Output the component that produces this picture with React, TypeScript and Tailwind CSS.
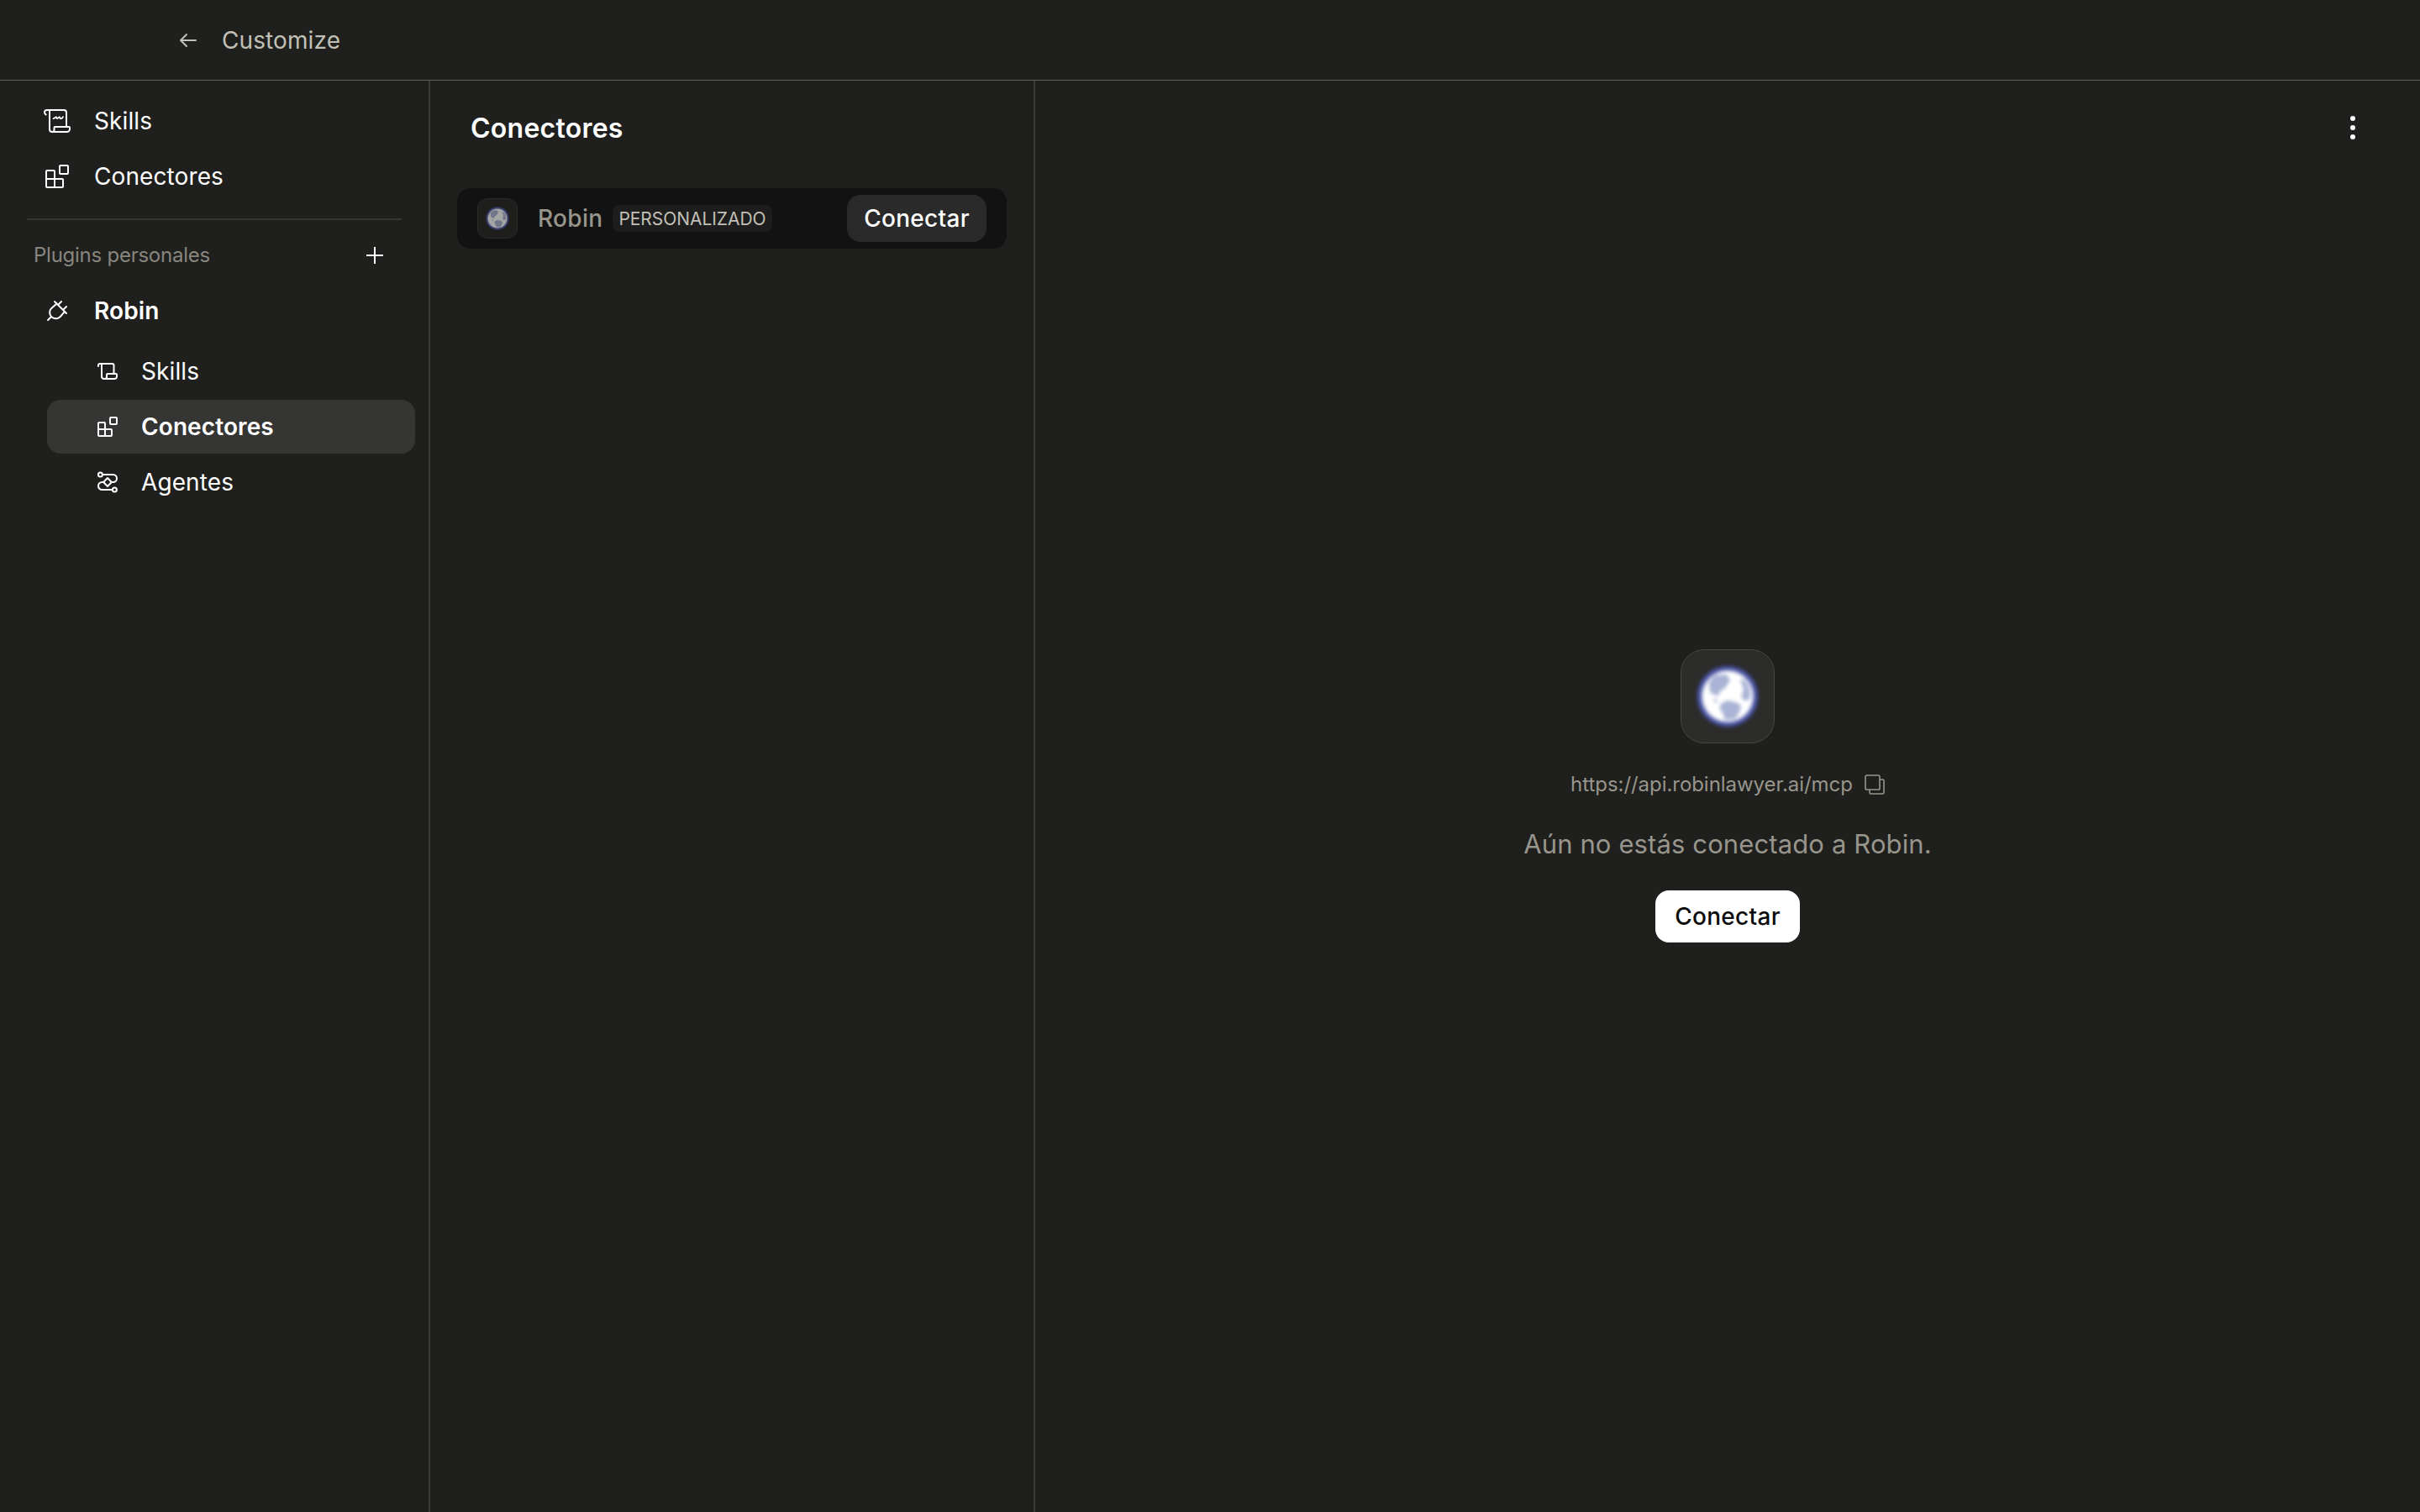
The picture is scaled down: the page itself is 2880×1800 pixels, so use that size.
import type { ReactNode } from "react";
import clsx from "clsx";

type IconProps = { className?: string };

function ScrollIcon({ className }: IconProps) {
    return (
        <svg viewBox="0 0 40 40" fill="none" stroke="currentColor" strokeWidth="2" strokeLinecap="round" strokeLinejoin="round" className={className}>
            <path d="M6.6 12.4C5.4 11.6 5 10.8 5 9.8A2.8 2.8 0 0 1 7.8 7H28a3 3 0 0 1 3 3v17" />
            <path d="M11 7v23a3 3 0 0 0 3 3h17.5a3.5 3.5 0 0 0 3.5-3.5V28a1 1 0 0 0-1-1H17.5a1 1 0 0 0-1 1v2.5A2.5 2.5 0 0 1 14 33" />
            <path d="m15.5 17.2 3.3-2 .9 2 3.1-2 .9 2c1.900 0 2.900-.8 3.300-2.200" strokeWidth="1.700" />
        </svg>
    );
}

function ScrollSmallIcon({ className }: IconProps) {
    return (
        <svg viewBox="0 0 32 32" fill="none" stroke="currentColor" strokeWidth="2" strokeLinecap="round" strokeLinejoin="round" className={className}>
            <path d="M5 10V9a2 2 0 0 1 2-2h14.5a2 2 0 0 1 2 2v10" />
            <path d="M9 7v15a3 3 0 0 0 3 3h12a3 3 0 0 0 3-3v-2a1 1 0 0 0-1-1H16a1 1 0 0 0-1 1v2.5a2.5 2.5 0 0 1-2.5 2.5" />
        </svg>
    );
}

function BlocksIcon({ className }: IconProps) {
    return (
        <svg viewBox="0 0 40 40" fill="none" stroke="currentColor" strokeWidth="2" strokeLinejoin="round" className={className}>
            <rect x="23" y="7" width="10" height="10" rx="1" />
            <path d="M8 13h8a1 1 0 0 1 1 1v9h9a1 1 0 0 1 1 1v8a1 1 0 0 1-1 1H8a1 1 0 0 1-1-1V14a1 1 0 0 1 1-1ZM7 23h10v10" />
        </svg>
    );
}

function BlocksSmallIcon({ className }: IconProps) {
    return (
        <svg viewBox="0 0 32 32" fill="none" stroke="currentColor" strokeWidth="2" strokeLinejoin="round" className={className}>
            <rect x="19" y="5" width="8" height="8" rx="1" />
            <path d="M6 11h6a1 1 0 0 1 1 1v7h7a1 1 0 0 1 1 1v6a1 1 0 0 1-1 1H6a1 1 0 0 1-1-1V12a1 1 0 0 1 1-1ZM5 19h8v8" />
        </svg>
    );
}

function AgentsIcon({ className }: IconProps) {
    return (
        <svg viewBox="0 0 32 32" fill="none" stroke="currentColor" strokeWidth="2" strokeLinecap="round" strokeLinejoin="round" className={className}>
            <circle cx="7.4" cy="7" r="2.5" />
            <circle cx="24.4" cy="25" r="2.5" />
            <path d="M10 7h12.5a4.5 4.5 0 0 1 0 9H21" />
            <path d="M11 16H9.5a4.5 4.5 0 0 0 0 9H22" />
            <path d="m16 11 4.8 5-4.8 5-4.8-5Z" />
        </svg>
    );
}

function PlugIcon({ className }: IconProps) {
    return (
        <svg viewBox="0 0 40 40" fill="none" stroke="currentColor" strokeWidth="2" strokeLinecap="round" strokeLinejoin="round" className={className}>
            <path d="m17 9 14 14" />
            <path d="M19.5 11.5 13 17.2a7.3 7.3 0 0 0 10.2 10.4L29 21" />
            <path d="M21.5 12.5 25 9M27.5 18.5 31 15M9 31l3.8-3.8" />
        </svg>
    );
}

function ArrowLeftIcon({ className }: IconProps) {
    return (
        <svg viewBox="0 0 32 32" fill="none" stroke="currentColor" strokeWidth="2" strokeLinecap="round" strokeLinejoin="round" className={className}>
            <path d="M25 16H7M14 9l-7 7 7 7" />
        </svg>
    );
}

function CopyIcon({ className }: IconProps) {
    return (
        <svg viewBox="0 0 24 24" fill="none" stroke="currentColor" strokeWidth="1.6" strokeLinejoin="round" className={className}>
            <rect x="1" y="1" width="17" height="17" rx="1.8" />
            <path d="M18 6h3.4A1.6 1.6 0 0 1 23 7.6v13.8a1.6 1.6 0 0 1-1.6 1.6H7.6A1.6 1.6 0 0 1 6 21.4V18" />
        </svg>
    );
}

function Globe({ className }: IconProps) {
    return (
        <svg viewBox="0 0 80 80" className={className}>
            <g className="blur-[2px]">
                <circle cx="40" cy="40" r="36.5" fill="#434e9c" />
                <circle cx="40" cy="40" r="32.5" fill="#7f88c2" />
                <circle cx="40" cy="40" r="30" fill="#ffffff" />
                <g fill="#a9b3d4">
                    <path d="m18 23 7-8 14-1 4 7-6 9-5 3-4 7-9-5Z" />
                    <path d="m55 19 6 2 5 9 1 11-5 5-6-5 3-9Z" />
                    <path d="m33 48 7-3 10 2 6 4-2 8-5 8-12 1-3-9-4-5Z" />
                    <path d="m24 42 4 3-1 3-4-2Z" opacity="0.8" />
                </g>
            </g>
        </svg>
    );
}

type NavItemProps = {
    icon: ReactNode;
    label: string;
    nested?: boolean;
    active?: boolean;
    bold?: boolean;
};

function NavItem({ icon, label, nested, active, bold }: NavItemProps) {
    return (
        <button
            className={clsx(
                "flex h-16 items-center gap-6 rounded-2xl text-left text-[28px] tracking-[0.1px]",
                nested ? "ml-10 pl-14" : "pl-8",
                active && "bg-[#353533]",
                (active || bold) && "font-semibold",
            )}
        >
            {icon}
            <span>{label}</span>
        </button>
    );
}

function Sidebar() {
    return (
        <nav className="flex w-[512px] shrink-0 flex-col border-r-2 border-[#3a3a38] px-4 pt-4">
            <div className="flex flex-col gap-0.5">
                <NavItem icon={<ScrollIcon className="size-10" />} label="Skills" />
                <NavItem icon={<BlocksIcon className="size-10" />} label="Conectores" />
            </div>
            <div className="mx-4 mt-[18px] h-0.5 bg-[#353533]" />
            <div className="mt-2.5 flex h-16 items-center justify-between pr-[38px] pl-6">
                <span className="text-[24px] tracking-[-0.25px] text-[#87867f]">Plugins personales</span>
                <svg viewBox="0 0 20 20" stroke="currentColor" strokeWidth="2" className="size-5">
                    <path d="M10 0v20M0 10h20" />
                </svg>
            </div>
            <div className="mt-0.5 flex flex-col">
                <NavItem icon={<PlugIcon className="size-10" />} label="Robin" bold />
                <div className="mt-2 flex flex-col gap-0.5">
                    <NavItem icon={<ScrollSmallIcon className="size-8" />} label="Skills" nested />
                    <NavItem icon={<BlocksSmallIcon className="size-8" />} label="Conectores" nested active />
                    <NavItem icon={<AgentsIcon className="size-8" />} label="Agentes" nested />
                </div>
            </div>
        </nav>
    );
}

function ConnectorList() {
    return (
        <section className="flex w-[720px] shrink-0 flex-col border-r-2 border-[#3a3a38] px-8">
            <h2 className="flex h-28 items-center pt-0.5 pl-4 text-[32px] font-semibold tracking-[0.25px]">Conectores</h2>
            <div className="mt-4 flex h-[72px] w-[654px] items-center rounded-2xl bg-[#121212] px-6">
                <div className="flex size-12 items-center justify-center rounded-xl border border-[#2c2c2a] bg-[#1e1e1c]">
                    <Globe className="size-[30px] opacity-60" />
                </div>
                <span className="ml-6 text-[28px] font-medium tracking-[0.3px] text-[#97958c]">Robin</span>
                <span className="-mr-2 ml-auto flex h-8 w-[190px] items-center justify-center rounded-lg bg-[#1d1d1d] pt-px text-[21px] tracking-[-0.05px] text-[#c2c0b6]">
                    PERSONALIZADO
                </span>
                <button className="ml-[97px] h-14 w-[166px] rounded-2xl bg-[#2a2a2a] text-[28px] font-medium tracking-[0.3px]">
                    Conectar
                </button>
            </div>
        </section>
    );
}

function ConnectorDetail() {
    return (
        <main className="flex min-w-0 flex-1 flex-col">
            <div className="flex h-28 items-center justify-end pr-[77px]">
                <button className="flex flex-col gap-[5px]">
                    <span className="size-1.5 rounded-full bg-white" />
                    <span className="size-1.5 rounded-full bg-white" />
                    <span className="size-1.5 rounded-full bg-white" />
                </button>
            </div>
            <div className="-mt-28 flex flex-1 flex-col items-center justify-center pb-0.5">
                <div className="flex size-28 items-center justify-center rounded-[28px] border border-[#474745] bg-[#2c2c2a]">
                    <Globe className="size-20" />
                </div>
                <div className="mt-[29px] flex h-10 items-center gap-3.5 text-[#97958c]">
                    <span className="text-[24px] tracking-[-0.05px]">https://api.robinlawyer.ai/mcp</span>
                    <CopyIcon className="size-6" />
                </div>
                <p className="mt-7 flex h-12 items-center text-[31px] tracking-[0.12px] text-[#97958c]">
                    Aún no estás conectado a Robin.
                </p>
                <button className="mt-[30px] h-[62px] w-[172px] rounded-2xl bg-white text-[28px] font-medium tracking-[0.3px] text-[#0b0b0b]">
                    Conectar
                </button>
            </div>
        </main>
    );
}

export default function App() {
    return (
        <div className="flex h-[1800px] w-[2880px] flex-col overflow-hidden bg-[#1f1f1d] font-[Inter,'Noto_Sans',sans-serif] text-white">
            <header className="flex h-24 shrink-0 items-center border-b border-[#5f5f5d] pl-[208px] text-[#c2c0b6]">
                <ArrowLeftIcon className="size-8" />
                <span className="ml-6 text-[28px] tracking-[0.1px]">Customize</span>
            </header>
            <div className="flex min-h-0 flex-1">
                <Sidebar />
                <ConnectorList />
                <ConnectorDetail />
            </div>
        </div>
    );
}
